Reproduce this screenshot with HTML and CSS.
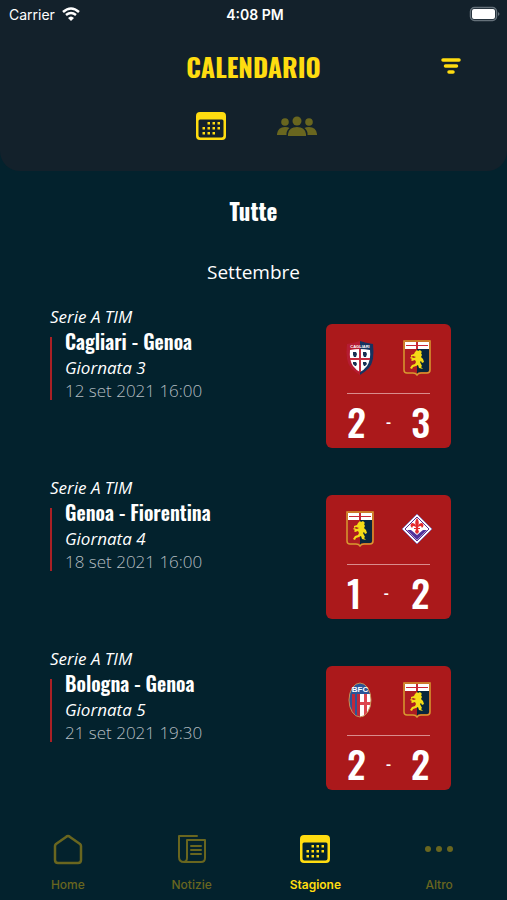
FILE: index.html
```html
<!DOCTYPE html>
<html lang="it">

<head>
    <meta charset="UTF-8">
    <meta name="viewport" content="width=device-width, initial-scale=1.0">
    <title>Calendario</title>

    <link rel="stylesheet" href="styles.css">
</head>

<body>
    <!-- icons and crests used more than once -->
    <svg class="sprite" aria-hidden="true">
        <symbol id="icon-calendar" viewBox="0 0 32 30">
            <path fill="currentColor" fill-rule="evenodd"
                d="M5 1h22a4 4 0 0 1 4 4v20a4 4 0 0 1-4 4H5a4 4 0 0 1-4-4V5a4 4 0 0 1 4-4zM5 8.500a1.500 1.500 0 0 0-1.500 1.500v14.500a2 2 0 0 0 2 2h21a2 2 0 0 0 2-2V10a1.500 1.500 0 0 0-1.500-1.500z" />
            <path fill="currentColor"
                d="M12.500 11h2.500v2.500h-2.500zM17.500 11h2.500v2.500h-2.500zM22.500 11h2.500v2.500h-2.500zM7.500 16h2.500v2.500H7.500zM12.500 16h2.500v2.500h-2.500zM17.500 16h2.500v2.500h-2.500zM22.500 16h2.500v2.500h-2.500zM7.500 21h2.500v2.500H7.500zM12.500 21h2.500v2.500h-2.500zM17.500 21h2.500v2.500h-2.500z" />
        </symbol>

        <symbol id="crest-genoa" viewBox="0 0 28 36">
            <path d="M14 9h12v21q0 2-2 2h-6q-3 0-4 2z" fill="#08263c" />
            <path d="M2 9h12v25q-1-2-4-2H4q-2 0-2-2z" fill="#ad1c22" />
            <path d="M2 2h24v7H2z" fill="#fff" />
            <path d="M3 5h22v1H3zM13 2h2v7h-2z" fill="#c92735" />
            <path d="M1 1h26v29q0 3-3 3h-6q-3 0-4 2-1-2-4-2H4q-3 0-3-3z" fill="none" stroke="#d99a31"
                stroke-width="1.500" />
            <path
                d="M12 12l2-2 1 1 2-1 2 2-1 1 1 2-1 2 2 2 1 3-2 1-1-2-1 1 1 2 1 2-1 1 2 2-4-1-1-3-2 1-3 1-1 2-2-1 2-3 3-1 1-2-1-2-3 1-1-1 1-1-2-1 1-1 3 1 2-1-3-1-2 1v-2l3-1z"
                fill="#f5dc16" />
        </symbol>
    </svg>

    <header class="header">
        <div class="status-bar">
            <div class="carrier">
                <span>Carrier</span>
                <svg width="20" height="16" viewBox="0 0 20 16" aria-hidden="true">
                    <path d="M2 6q8-7 16 0M5 9q5-4 10 0" fill="none" stroke="#fff" stroke-width="2.500" />
                    <path d="M7 12q3-3 6 0l-3 3z" fill="#fff" />
                </svg>
            </div>
            <span class="time">4:08 PM</span>
            <svg class="battery" width="32" height="16" viewBox="0 0 32 16" aria-hidden="true">
                <rect x="1.500" y="1.500" width="26" height="13" rx="4" fill="none" stroke="#65717a"
                    stroke-width="1.500" />
                <rect x="3" y="3" width="23" height="10" rx="2" fill="#fff" />
                <path d="M29 6q3 2 0 4z" fill="#65717a" />
            </svg>
        </div>

        <div class="title-bar">
            <h1>CALENDARIO</h1>
            <button class="filter" type="button" aria-label="Filtra">
                <svg width="20" height="18" viewBox="0 0 20 18">
                    <path d="M2 3h16M4.500 9h11M8 15h4" stroke="currentColor" stroke-width="3.500"
                        stroke-linecap="round" />
                </svg>
            </button>
        </div>

        <div class="tabs">
            <button type="button" class="tab active" aria-label="Calendario">
                <svg width="32" height="30"><use href="#icon-calendar" /></svg>
            </button>
            <button type="button" class="tab" aria-label="Squadre">
                <svg width="40" height="20" viewBox="0 0 40 20" fill="currentColor">
                    <circle cx="20" cy="5" r="4.500" />
                    <circle cx="8" cy="6" r="3.800" />
                    <circle cx="32" cy="6" r="3.800" />
                    <path
                        d="M11 20v-2q1-7 9-7t9 7v2zM0 19v-1q1-7 8-7 3 0 4.500 1Q9 15 9.500 19zM40 19v-1q-1-7-8-7-3 0-4.500 1Q31 15 30.500 19z" />
                </svg>
            </button>
        </div>
    </header>

    <main>
        <h2>Tutte</h2>
        <h3 class="month">Settembre</h3>

        <ul class="matches">
            <li class="match">
                <div class="info">
                    <p class="league">Serie A TIM</p>
                    <div class="details">
                        <h4>Cagliari - Genoa</h4>
                        <p class="round">Giornata 3</p>
                        <p class="date">12 set 2021 16:00</p>
                    </div>
                </div>
                <div class="card">
                    <div class="crests">
                        <svg viewBox="0 0 28 36" role="img" aria-label="Cagliari">
                            <path d="M1 4q7-1 13-3 6 2 13 3 2 17-4 24-4 4-9 7-5-3-9-7Q-1 21 1 4z" fill="#b51c32" />
                            <path d="M14 1q6 2 13 3 2 17-4 24-4 4-9 7z" fill="#17335f" />
                            <path d="M4 10q10-2 20 0 1 10-3 16-3 4-7 6-4-2-7-6-4-6-3-16z" fill="#fff" />
                            <path d="M13 9h2v23h-2zM4 18h20v2H4z" fill="#c32b3d" />
                            <path
                                d="M7 12h3l1 2-1 3H8l-1-2zM17 12h3l1 2-1 3h-2l-1-2zM7 22h3l1 2-1 2H9l-2-2zM17 22h3l1 2-2 2h-1l-1-2z"
                                fill="#173053" />
                            <text x="14" y="8" text-anchor="middle" class="crest-text crest-text-small">CAGLIARI</text>
                        </svg>
                        <svg role="img" aria-label="Genoa"><use href="#crest-genoa" /></svg>
                    </div>
                    <div class="score"><span>2</span><span class="dash">-</span><span>3</span></div>
                </div>
            </li>

            <li class="match">
                <div class="info">
                    <p class="league">Serie A TIM</p>
                    <div class="details">
                        <h4>Genoa - Fiorentina</h4>
                        <p class="round">Giornata 4</p>
                        <p class="date">18 set 2021 16:00</p>
                    </div>
                </div>
                <div class="card">
                    <div class="crests">
                        <svg role="img" aria-label="Genoa"><use href="#crest-genoa" /></svg>
                        <svg viewBox="0 0 32 32" role="img" aria-label="Fiorentina">
                            <path d="M16 1l15 15-15 15L1 16z" fill="#fff" stroke="#8d74ae" />
                            <path d="M16 4l12 12-12 12L4 16z" fill="#fff" stroke="#5b3295" />
                            <path d="M6 17h4l6 5 6-5h4L16 27z" fill="#51329a" />
                            <path
                                d="M16 5q3 4 1 8 1-3 4-3 3 2 0 5l-1-2q-3 0-3 2h2v1h-2l1 3-2 2-2-2 1-3h-2v-1h2q0-2-3-2l-1 2q-3-3 0-5 3 0 4 3-2-4 1-8z"
                                fill="#e42a2d" />
                        </svg>
                    </div>
                    <div class="score"><span>1</span><span class="dash">-</span><span>2</span></div>
                </div>
            </li>

            <li class="match">
                <div class="info">
                    <p class="league">Serie A TIM</p>
                    <div class="details">
                        <h4>Bologna - Genoa</h4>
                        <p class="round">Giornata 5</p>
                        <p class="date">21 set 2021 19:30</p>
                    </div>
                </div>
                <div class="card">
                    <div class="crests">
                        <svg viewBox="0 0 24 36" role="img" aria-label="Bologna">
                            <clipPath id="bologna-oval">
                                <ellipse cx="12" cy="18" rx="11" ry="17" />
                            </clipPath>
                            <g clip-path="url(#bologna-oval)">
                                <path d="M0 0h24v36H0z" fill="#2b5597" />
                                <path d="M4 12h3v24H4zM9 12h3v24H9z" fill="#bd293b" />
                                <path d="M12 12h12v24H12z" fill="#fff" />
                                <path d="M16 12h3v24h-3zM12 20h12v3H12z" fill="#dd4650" />
                            </g>
                            <ellipse cx="12" cy="18" rx="11" ry="17" fill="none" stroke="#c98d51" />
                            <text x="12" y="10" text-anchor="middle" class="crest-text">BFC</text>
                        </svg>
                        <svg role="img" aria-label="Genoa"><use href="#crest-genoa" /></svg>
                    </div>
                    <div class="score"><span>2</span><span class="dash">-</span><span>2</span></div>
                </div>
            </li>
        </ul>
    </main>

    <nav class="bottom-nav">
        <a href="#home">
            <svg width="32" height="32" viewBox="0 0 32 32" fill="none" stroke="currentColor" stroke-width="2.500"
                stroke-linejoin="round">
                <path d="M16 3q1 0 2 1l10 7q1 1 1 2v14q0 3-3 3H6q-3 0-3-3V13q0-1 1-2l10-7q1-1 2-1z" />
            </svg>
            <span>Home</span>
        </a>
        <a href="#notizie">
            <svg width="32" height="32" viewBox="0 0 32 32" fill="none" stroke="currentColor" stroke-width="2"
                stroke-linecap="round" stroke-linejoin="round">
                <path d="M21 3H3v21q0 5 5 5h17q4 0 4-4V7H11v18q0 4-4 4M15 13h10M15 17h10M15 21h10" />
            </svg>
            <span>Notizie</span>
        </a>
        <a href="#stagione" class="active" aria-current="page">
            <svg width="32" height="32"><use href="#icon-calendar" /></svg>
            <span>Stagione</span>
        </a>
        <a href="#altro">
            <svg width="32" height="32" viewBox="0 0 32 32" fill="currentColor">
                <circle cx="5" cy="16" r="3" />
                <circle cx="16" cy="16" r="3" />
                <circle cx="27" cy="16" r="3" />
            </svg>
            <span>Altro</span>
        </a>
    </nav>
</body>

</html>
```
FILE: styles.css
```css
* {
    box-sizing: border-box;
}

body {
    display: flex;
    flex-direction: column;
    min-height: 100vh;
    margin: 0;

    background-color: #03222d;
    color: #fff;
    font-family: "Open Sans", sans-serif;
}

h1,
h2,
h3,
h4,
p,
ul {
    margin: 0;
    padding: 0;
}

h1,
h2,
h4,
.score {
    font-family: Oswald, "Liberation Sans Narrow", "DejaVu Sans Condensed", sans-serif;
    font-weight: 600;
}

svg {
    display: block;
}

button {
    padding: 0;
    border: 0;
    background: none;
    color: inherit;
}

.sprite {
    position: absolute;
    width: 0;
    height: 0;
}

/* header */
.header {
    padding-bottom: 23px;
    border-radius: 0 0 20px 20px;
    background-color: #13212b;
}

.status-bar {
    display: grid;
    grid-template-columns: 1fr auto 1fr;
    align-items: center;
    height: 28px;
    padding: 0 6px 0 9px;

    font-family: Inter, sans-serif;
    font-size: 14px;
}

.carrier {
    display: flex;
    align-items: center;
    gap: 6px;
}

.time {
    font-weight: 600;
}

.battery {
    justify-self: end;
}

.title-bar {
    display: grid;
    grid-template-columns: 1fr auto 1fr;
    align-items: center;
    height: 76px;
    padding: 0 46px;

    color: #ffdc10;
}

.title-bar h1 {
    grid-column: 2;
    font-size: 26px;
    font-weight: bold;
}

.filter {
    justify-self: end;
}

.tabs {
    display: flex;
    justify-content: center;
    align-items: center;
    gap: 50px;
    height: 44px;
    padding-left: 4px;
}

.tab,
.bottom-nav a {
    color: #69661f;
}

.tab.active,
.bottom-nav .active {
    color: #ffdc10;
}

/* matches */
main {
    flex: 1;
    padding: 24px 50px 0;
}

h2,
.month {
    text-align: center;
}

h2 {
    font-size: 23px;
    font-weight: bold;
    line-height: 32px;
}

.month {
    margin: 30px 0 20px;

    font-size: 19px;
    font-weight: normal;
    line-height: 30px;
}

.matches {
    display: flex;
    flex-direction: column;
    gap: 30px;

    list-style-type: none;
}

.match {
    display: flex;
    justify-content: space-between;
    padding-right: 6px;
}

.league,
.round {
    font-size: 17px;
    font-style: italic;
}

.league {
    line-height: 20px;
}

.details {
    padding-left: 15px;
    background: linear-gradient(#aa2025, #aa2025) left bottom / 2px 63px no-repeat;
}

.details h4 {
    font-size: 20px;
    line-height: 28px;
}

.round {
    line-height: 26px;
}

.date {
    color: #b4bdc1;
    font-size: 17px;
    font-weight: 300;
    line-height: 19px;
}

.card {
    width: 125px;
    margin-top: 17px;
    padding: 16px 21px 0;
    border-radius: 6px;
    background-color: #ab191b;
}

.crests {
    display: flex;
    justify-content: space-between;
    margin: 0 -3px;
    padding-bottom: 17px;
}

.crests svg {
    width: 32px;
    height: 36px;
}

.score {
    display: flex;
    justify-content: space-between;
    align-items: center;
    height: 55px;
    border-top: 1px solid #d98c8d;

    font-size: 38px;
    font-weight: 500;
    line-height: 54px;
}

.score .dash {
    font-size: 16px;
}

/* bottom navigation */
.bottom-nav {
    display: flex;
    padding: 24px 6px 6px;
}

.bottom-nav a {
    display: flex;
    flex: 1;
    flex-direction: column;
    align-items: center;
    gap: 11px;

    font-family: Inter, sans-serif;
    font-size: 12px;
    font-weight: 500;
    line-height: 18px;
    text-decoration: none;
}

.bottom-nav .active {
    font-weight: 600;
}

/* lettering on the crests */
.crest-text {
    fill: #fff;
    font-family: "Liberation Sans", sans-serif;
    font-size: 8px;
    font-weight: bold;
}

.crest-text-small {
    font-size: 4px;
}
```
